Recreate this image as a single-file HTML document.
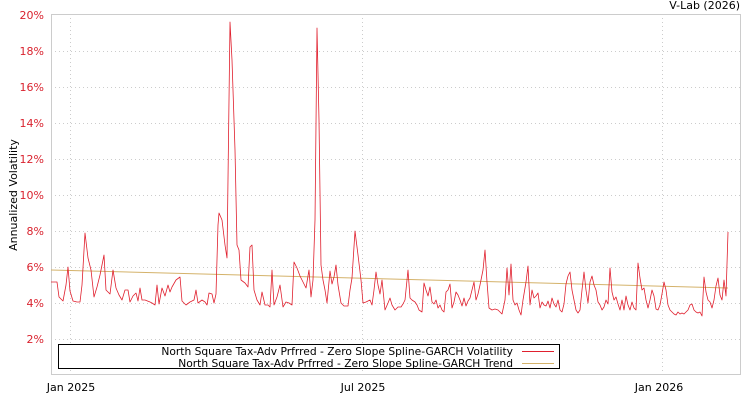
<!DOCTYPE html>
<html><head><meta charset="utf-8"><style>
body{margin:0;background:#fff;width:750px;height:400px;overflow:hidden}
svg{display:block;font-family:"DejaVu Sans","Liberation Sans",sans-serif}
</style></head><body>
<svg width="750" height="400" viewBox="0 0 750 400">
<rect x="0" y="0" width="750" height="400" fill="#fff"/>
<text x="740" y="9" font-size="11" text-anchor="end" fill="#000">V-Lab (2026)</text>
<g stroke="#ccc" stroke-width="1" stroke-dasharray="1,3">
<line x1="51" x2="741" y1="339.5" y2="339.5"/><line x1="51" x2="741" y1="303.5" y2="303.5"/>
<line x1="51" x2="741" y1="267.5" y2="267.5"/><line x1="51" x2="741" y1="231.5" y2="231.5"/>
<line x1="51" x2="741" y1="195.5" y2="195.5"/><line x1="51" x2="741" y1="159.5" y2="159.5"/>
<line x1="51" x2="741" y1="123.5" y2="123.5"/><line x1="51" x2="741" y1="87.5" y2="87.5"/>
<line x1="51" x2="741" y1="51.5" y2="51.5"/>
<line x1="70.5" x2="70.5" y1="14" y2="374"/><line x1="362.5" x2="362.5" y1="14" y2="374"/><line x1="662.5" x2="662.5" y1="14" y2="374"/>
</g>
<rect x="51.5" y="14.5" width="689" height="360" fill="none" stroke="#ccc"/>
<g font-size="11" fill="#d9222e" text-anchor="end">
<text x="44" y="19">20%</text><text x="44" y="55">18%</text><text x="44" y="91">16%</text>
<text x="44" y="127">14%</text><text x="44" y="163">12%</text><text x="44" y="199">10%</text>
<text x="44" y="235">8%</text><text x="44" y="271">6%</text><text x="44" y="307">4%</text><text x="44" y="343">2%</text>
</g>
<text transform="translate(17,195) rotate(-90)" font-size="11" text-anchor="middle" fill="#000">Annualized Volatility</text>
<g font-size="11" fill="#000" text-anchor="middle">
<text x="71" y="391">Jan 2025</text><text x="363" y="391">Jul 2025</text><text x="659" y="391">Jan 2026</text>
</g>
<line x1="51" y1="270" x2="728" y2="288" stroke="#d4b26a" stroke-width="1"/>
<polyline fill="none" stroke="#e0202e" stroke-width="0.8" stroke-linejoin="round" points="51,282 57,282 59,297 63,301 66,285 68,267 70,291 73,301 77,302 80,302 82,285 85,233 88,258 91,270 94,297 97,287 100,275 104,255 106,290 110,294 113,270 116,288 119,295 122,300 125,290 128,290 130,302 133,296 136,293 138,301 140,288 142,300 145,300 150,302 152,303 155,305 157,285 159,304 162,288 165,296 168,285 170,292 172,287 176,280 180,277 182,301 186,305 190,302 194,300 196,290 198,303 202,300 205,302 207,305 209,293 212,294 214,303 216,294 218,225 219,213 222,220 225,245 227,258 229,100 230,22 232,60 235,150 237,245 239,250 241,280 245,283 248,287 250,247 252,245 254,290 257,300 260,305 262,292 265,305 268,305 270,307 272,270 274,305 277,297 280,285 283,307 286,302 289,303 292,305 294,262 297,268 300,276 303,282 306,288 309,270 311,297 313,280 315,220 317,28 319,120 321,265 323,280 325,290 327,303 330,271 332,284 334,277 336,265 338,285 341,303 344,306 348,306 350,290 352,278 355,231 358,255 361,280 363,303 366,302 370,300 372,305 374,290 376,272 378,285 380,294 382,280 385,310 388,303 390,298 392,305 395,310 398,307 401,307 403,304 405,300 408,270 410,298 412,300 415,302 417,305 419,310 422,312 424,283 426,290 428,296 430,287 432,302 434,304 436,300 438,308 440,305 442,310 444,312 446,292 448,290 450,284 452,308 454,302 456,292 458,295 460,300 462,306 464,298 466,306 468,301 470,298 472,290 474,282 476,300 478,294 480,285 483,270 485,250 487,282 489,308 492,310 495,309 498,310 500,312 502,314 505,300 507,268 509,295 511,264 513,300 515,305 517,303 519,310 521,315 523,300 526,282 528,266 530,305 532,290 534,298 536,296 538,293 540,308 542,302 544,305 546,306 548,301 550,308 552,298 554,304 556,307 558,300 560,310 562,312 564,304 566,284 568,276 570,272 572,290 574,300 576,310 578,313 580,310 582,290 584,272 586,290 588,303 590,282 592,276 594,285 596,290 598,302 600,305 602,310 604,307 606,300 608,304 610,268 612,292 614,300 616,297 618,304 620,310 622,300 624,310 626,296 628,305 630,310 632,302 634,308 636,310 638,263 640,278 642,290 644,288 646,300 648,308 650,300 652,290 654,296 656,309 658,310 660,305 662,294 664,282 666,290 668,305 670,310 672,312 674,314 676,315 678,312 680,314 682,313 684,314 686,312 688,310 690,305 692,304 694,310 696,312 698,313 700,312 702,316 704,277 706,292 708,300 710,302 712,308 714,300 716,286 718,278 720,295 722,300 724,280 726,296 728,232"/>
<rect x="58.5" y="344.5" width="501" height="24" fill="#fff" stroke="#000" stroke-width="1"/>
<g font-size="10.7" fill="#000" text-anchor="end">
<text x="513" y="355">North Square Tax-Adv Prfrred - Zero Slope Spline-GARCH Volatility</text>
<text x="513" y="367">North Square Tax-Adv Prfrred - Zero Slope Spline-GARCH Trend</text>
</g>
<line x1="522" x2="554" y1="351.5" y2="351.5" stroke="#e0202e"/>
<line x1="522" x2="554" y1="363.5" y2="363.5" stroke="#d4b26a"/>
</svg>
</body></html>
